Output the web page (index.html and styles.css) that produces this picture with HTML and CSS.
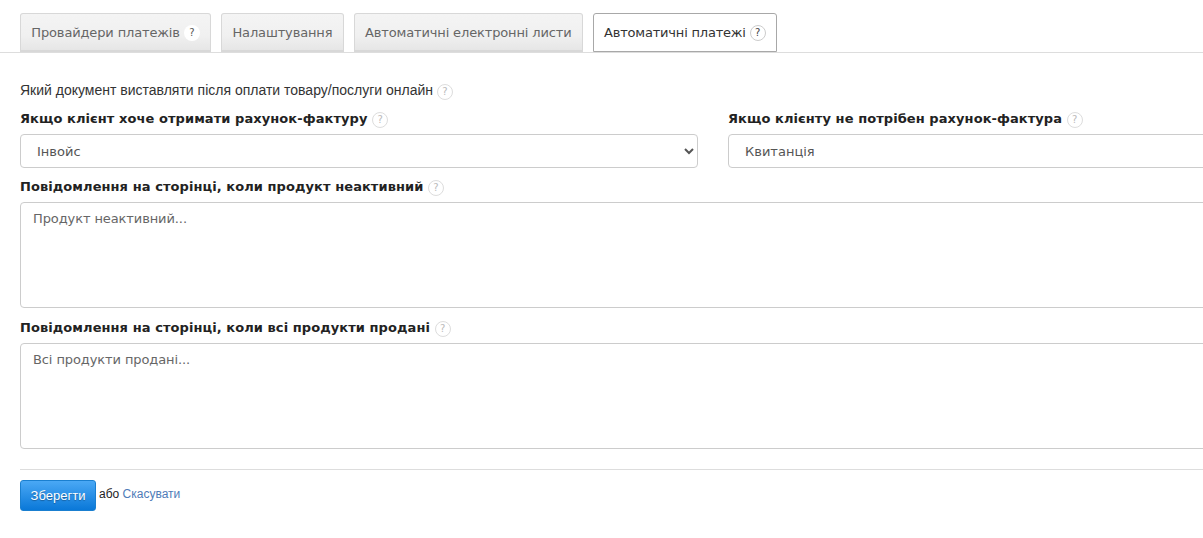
FILE: index.html
```html
<!DOCTYPE html>
<html lang="uk">
<head>
<meta charset="utf-8">
<title>Автоматичні платежі</title>
<link rel="stylesheet" href="styles.css">
</head>
<body>
<div class="page">
  <nav class="tabs">
    <a class="tab">Провайдери платежів <span class="help help-white">?</span></a>
    <a class="tab">Налаштування</a>
    <a class="tab">Автоматичні електронні листи</a>
    <a class="tab tab-active">Автоматичні платежі <span class="help help-active">?</span></a>
  </nav>
  <form class="form">
    <p class="intro">Який документ виставляти після оплати товару/послуги онлайн <span class="help help-faint">?</span></p>
    <div class="cols">
      <div class="col">
        <label class="label">Якщо клієнт хоче отримати рахунок-фактуру <span class="help help-faint">?</span></label>
        <select class="select"><option>Інвойс</option></select>
      </div>
      <div class="col">
        <label class="label">Якщо клієнту не потрібен рахунок-фактура <span class="help help-faint">?</span></label>
        <select class="select"><option>Квитанція</option></select>
      </div>
    </div>
    <label class="label label-msg">Повідомлення на сторінці, коли продукт неактивний <span class="help help-faint">?</span></label>
    <textarea class="area" placeholder="Продукт неактивний..."></textarea>
    <label class="label label-msg label-second">Повідомлення на сторінці, коли всі продукти продані <span class="help help-faint">?</span></label>
    <textarea class="area" placeholder="Всі продукти продані..."></textarea>
    <div class="actions">
      <button type="button" class="save">Зберегти</button>
      <span class="or">або <a class="cancel">Скасувати</a></span>
    </div>
  </form>
</div>
</body>
</html>
```
FILE: styles.css
```css
html, body { margin: 0; padding: 0; background: #fff; overflow: hidden; height: 100%; }
.page { width: 1406px; padding-top: 13px; color: #222; font-family: "DejaVu Sans", Verdana, sans-serif; font-size: 13px; }
.tabs { display: flex; gap: 10px; padding-left: 20px; border-bottom: 1px solid #ddd; height: 39px; }
.tab { box-sizing: border-box; height: 39px; padding: 0 10.3px; display: flex; align-items: center; border: 1px solid #d8d8d8; border-bottom-width: 2px; border-radius: 3px 3px 0 0; background: linear-gradient(#f4f4f4 0, #f0f0f0 60%, #e6e6e6 100%); color: #666; white-space: pre; letter-spacing: -0.14px; }
.tab-active { background: #fff; border: 1px solid #a8a8a8; color: #333; letter-spacing: -0.2px; }
.help { box-sizing: border-box; display: inline-flex; align-items: center; justify-content: center; width: 16px; height: 16px; margin-block: -4px; border-radius: 50%; font-size: 10px; line-height: 1; vertical-align: 0; font-weight: normal; letter-spacing: 0; font-family: "DejaVu Sans", sans-serif; }
.help-white { background: #fff; color: #555; margin-block: 1px 0; }
.help-active { background: #fff; border: 1px solid #ccc; color: #444; margin-block: 1px 0; }
.help-faint { background: #fff; border: 1px solid #ddd; color: #bbb; }
.form { padding: 27px 0 0 20px; width: 1386px; }
.intro { margin: 0; font: 14px/20px "Liberation Sans", Arial, sans-serif; color: #333; }
.cols { display: flex; gap: 30px; margin-top: 9px; }
.col { width: 678px; display: flex; flex-direction: column; }
.label { display: block; font-weight: bold; line-height: 20px; color: #222; letter-spacing: 0.07px; }
.select { box-sizing: border-box; width: 100%; height: 34px; margin-top: 5px; padding: 0 12px; background: #fff; border: 1px solid #ccc; border-radius: 4px; font: 13px "DejaVu Sans", sans-serif; color: #555; }
.label-msg { margin-top: 9px; }
.label-second { margin-top: 10px; }
.area { display: block; box-sizing: border-box; width: 100%; height: 106px; margin-top: 5px; padding: 6px 12px; border: 1px solid #ccc; border-radius: 4px; font: 13px/19px "DejaVu Sans", sans-serif; letter-spacing: -0.1px; resize: none; }
.area::placeholder { color: #666; opacity: 1; }
.actions { margin-top: 20px; padding-top: 10px; border-top: 1px solid #ddd; display: flex; align-items: flex-start; gap: 3px; }
.save { box-sizing: border-box; width: 76px; height: 31px; padding: 0; border: 1px solid #1a7fd0; border-radius: 3px; background: linear-gradient(#4aa8f5, #0a78d8); color: #fff; font: 13px "Liberation Sans", Arial, sans-serif; text-shadow: 0 1px 1px rgba(0,0,0,.3); }
.or { font: 12px/28px "Liberation Sans", Arial, sans-serif; color: #222; }
.cancel { color: #4f7cb8; }
```
